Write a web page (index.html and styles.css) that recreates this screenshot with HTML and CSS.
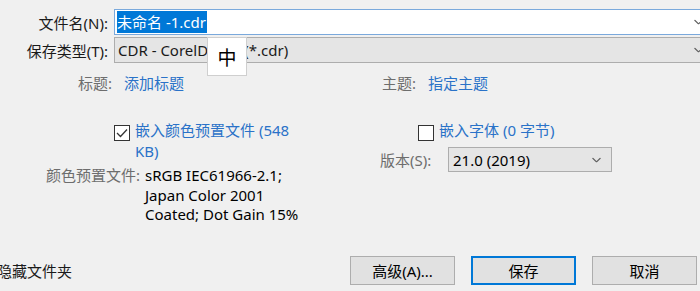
FILE: index.html
```html
<!DOCTYPE html>
<html lang="zh-CN">
  <head>
    <meta charset="UTF-8">
    <title>保存绘图</title>

    <link rel="stylesheet" href="styles.css">
  </head>
  <body>
    <div class="dialog">
      <div class="fields">
        <label class="field-label">文件名(N):</label>
        <div class="textbox">
          <span class="selected">未命名 -1.cdr</span>
          <svg class="chevron" width="9" height="5" viewBox="0 0 9 5"><polyline points="0.5,0.5 4.5,4.5 8.5,0.5" /></svg>
        </div>
        <label class="field-label">保存类型(T):</label>
        <div class="combo">
          <span>CDR - CorelDRAW (*.cdr)</span>
          <svg class="chevron" width="9" height="5" viewBox="0 0 9 5"><polyline points="0.5,0.5 4.5,4.5 8.5,0.5" /></svg>
        </div>
      </div>

      <div class="ime">中</div>

      <div class="options">
        <div class="col col-left">
          <div class="meta">
            <span class="meta-label">标题:</span>
            <a class="link" href="#">添加标题</a>
          </div>
          <div class="check check-profile">
            <span class="box checked">
              <svg width="12" height="10" viewBox="0 0 12 10"><polyline points="1,5 4.5,8.5 11,1.5" /></svg>
            </span>
            <span class="check-text">嵌入颜色预置文件 (548 KB)</span>
          </div>
          <div class="profile">
            <span class="profile-label">颜色预置文件:</span>
            <span class="profile-value">sRGB IEC61966-2.1; Japan Color 2001 Coated; Dot Gain 15%</span>
          </div>
        </div>

        <div class="col col-right">
          <div class="meta">
            <span class="meta-label meta-label-wide">主题:</span>
            <a class="link" href="#">指定主题</a>
          </div>
          <div class="check check-fonts">
            <span class="box"></span>
            <span class="check-text">嵌入字体 (0 字节)</span>
          </div>
          <div class="version">
            <span class="version-label">版本(S):</span>
            <div class="select">
              <span>21.0 (2019)</span>
              <svg class="chevron" width="9" height="5" viewBox="0 0 9 5"><polyline points="0.5,0.5 4.5,4.5 8.5,0.5" /></svg>
            </div>
          </div>
        </div>
      </div>

      <div class="footer">
        <span class="hide-folders">隐藏文件夹</span>
        <div class="buttons">
          <button class="button">高级(A)...</button>
          <button class="button button-default">保存</button>
          <button class="button">取消</button>
        </div>
      </div>
    </div>
  </body>
</html>
```

FILE: styles.css
```css
html {
  box-sizing: border-box;
  font-family: "Segoe UI", "Noto Sans", "Noto Sans CJK SC", sans-serif;
  font-size: 15px;
}

*,
*:before,
*:after {
  box-sizing: inherit;
}

body {
  background: #f0f0f0;
  color: #1a1a1a;
  margin: 0;
  overflow: hidden;
}

.dialog {
  display: flex;
  flex-direction: column;
  height: 291px;
  padding: 9px 0 6px;
  position: relative;
}

.fields {
  display: grid;
  grid-template-columns: 114px 600px;
  row-gap: 2px;
}

.field-label {
  align-items: center;
  display: flex;
  justify-content: flex-end;
  padding-right: 6px;
  white-space: nowrap;
}

.textbox,
.combo,
.select {
  align-items: center;
  display: flex;
  height: 26px;
  position: relative;
  white-space: nowrap;
}

.textbox {
  background: #fff;
  border: 1px solid #7aa9dc;
  padding-left: 2px;
}

.selected {
  background: #0078d7;
  color: #fff;
  line-height: 22px;
  padding-right: 1px;
}

.combo {
  background: #e5e5e5;
  border: 1px solid #adadad;
  padding-left: 3px;
}

.chevron {
  fill: none;
  position: absolute;
  right: 10px;
  stroke: #606060;
  stroke-width: 1.1;
  top: 50%;
  transform: translateY(-50%);
}

.ime {
  align-items: center;
  background: #fff;
  border: 1px solid #cfcfcf;
  color: #000;
  display: flex;
  font-size: 19px;
  height: 39px;
  justify-content: center;
  left: 207px;
  position: absolute;
  top: 37px;
  width: 40px;
}

.options {
  display: flex;
  margin-top: 10px;
}

.col {
  display: flex;
  flex-direction: column;
}

.col-left {
  width: 380px;
}

.meta {
  display: flex;
  line-height: 21px;
  white-space: nowrap;
}

.meta-label {
  color: #6d6d6d;
  padding-right: 12px;
  text-align: right;
  width: 124px;
}

.meta-label-wide {
  padding: 0 0 0 2px;
  text-align: left;
  width: 48px;
}

.link {
  color: #2a72c8;
  text-decoration: none;
}

.check {
  display: flex;
  gap: 5px;
  line-height: 21px;
  margin-top: 26px;
}

.check-profile {
  margin-left: 114px;
}

.check-fonts {
  margin-left: 38px;
}

.box {
  align-items: center;
  background: #fff;
  border: 1px solid #333;
  display: flex;
  flex: none;
  height: 16px;
  justify-content: center;
  margin-top: 5px;
  width: 16px;
}

.box svg {
  fill: none;
  stroke: #333;
  stroke-width: 1.3;
}

.check-text {
  color: #2a72c8;
  width: 165px;
}

.check-fonts .check-text {
  white-space: nowrap;
  width: auto;
}

.profile {
  display: flex;
  line-height: 19.5px;
  margin-top: 4px;
}

.profile-label {
  color: #6d6d6d;
  padding-right: 5px;
  text-align: right;
  white-space: nowrap;
  width: 145px;
}

.profile-value {
  color: #000;
  width: 165px;
}

.version {
  align-items: center;
  display: flex;
  margin-top: 6px;
}

.version-label {
  color: #6d6d6d;
  white-space: nowrap;
  width: 68px;
}

.select {
  background: #e5e5e5;
  border: 1px solid #adadad;
  color: #000;
  height: 25px;
  padding-left: 4px;
  width: 164px;
}

.footer {
  align-items: center;
  display: flex;
  justify-content: space-between;
  margin-top: auto;
  padding-right: 3px;
}

.hide-folders {
  margin-left: -3px;
  white-space: nowrap;
}

.buttons {
  display: flex;
  gap: 16px;
}

.button {
  background: #e1e1e1;
  border: 1px solid #adadad;
  color: #000;
  font: inherit;
  height: 29px;
  padding: 0;
  width: 105px;
}

.button-default {
  border-color: #0078d7;
  box-shadow: inset 0 0 0 1px #0078d7;
}
```
